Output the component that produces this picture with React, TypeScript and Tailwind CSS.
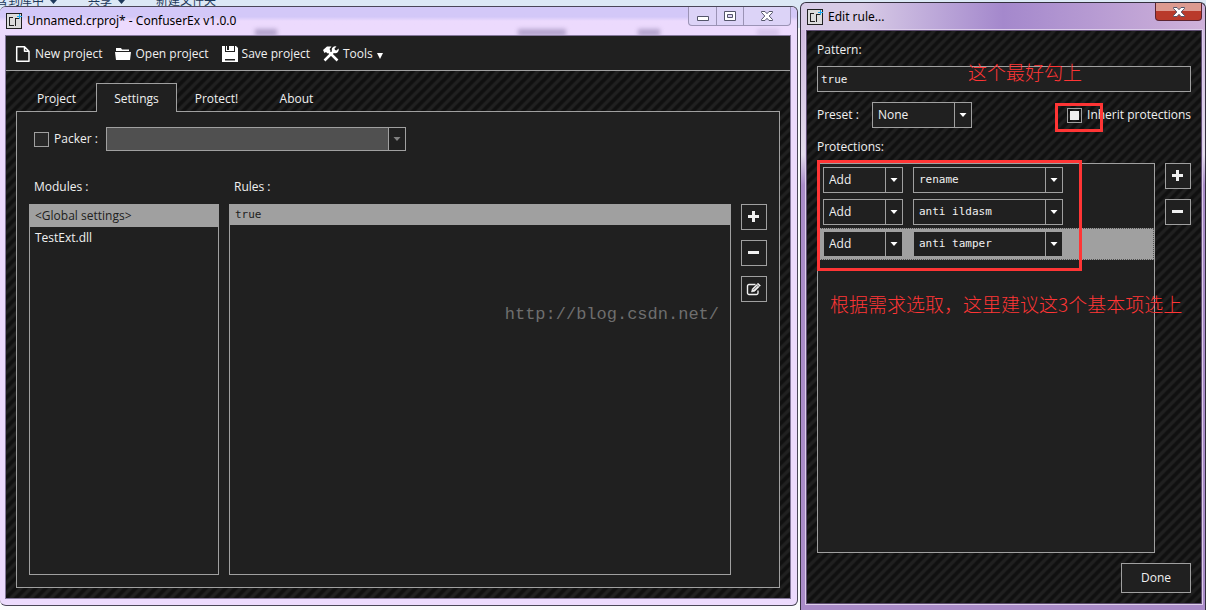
import { useState } from 'react';
import type { ReactNode } from 'react';

const STRIPES =
  'bg-[#202020] bg-[linear-gradient(135deg,#101010_0%,#101010_18%,#202020_28%,#202020_42%,#101010_52%,#101010_68%,#202020_78%,#202020_92%,#101010_100%)] bg-[length:10px_10px]';

const TABS = ['Project', 'Settings', 'Protect!', 'About'];
const MODULES = ['<Global settings>', 'TestExt.dll'];
const PROTECTIONS = ['rename', 'anti ildasm', 'anti tamper'];

function Logo() {
  return (
    <svg viewBox="0 0 16 16" className="h-4 w-4 shrink-0" shapeRendering="crispEdges" aria-hidden="true">
      <path d="M0.5 0.5h15v15h-15z" fill="#dcdcdc" stroke="#202020" />
      <path d="M6.5 4.5h-3v8h4M9.5 13v-7.5h3" fill="none" stroke="#202020" />
      <path d="M13 0.5v5M10.5 3h5" fill="none" stroke="#1ba8f0" />
    </svg>
  );
}

interface ComboProps {
  label: string;
  options: string[];
  className?: string;
  textClass?: string;
  arrowClass?: string;
  disabled?: boolean;
}

function Combo({
  label,
  options,
  className = 'h-[26px]',
  textClass = 'pl-[5px] text-xs',
  arrowClass = 'text-white',
  disabled,
}: ComboProps) {
  return (
    <div className={`relative flex border border-[#a0a0a0] bg-[#202020] ${className}`}>
      <select
        aria-label={label}
        disabled={disabled}
        className={`w-full appearance-none outline-none ${textClass} ${disabled ? 'bg-[#505050]' : 'bg-transparent'}`}
      >
        {options.map((option) => (
          <option key={option} className="bg-[#202020]">{option}</option>
        ))}
      </select>
      <span className={`pointer-events-none absolute inset-y-0 right-0 flex w-[17px] items-center justify-center border-l border-[#a0a0a0] bg-[#202020] ${arrowClass}`}>
        <svg viewBox="0 0 8 4" className="h-1 w-2"><path d="M.5 0h7L4 4z" fill="currentColor" /></svg>
      </span>
    </div>
  );
}

function SquareButton({ label, children }: { label: string; children: ReactNode }) {
  return (
    <button type="button" aria-label={label} className="flex h-[26px] w-[26px] items-center justify-center border border-[#a0a0a0] bg-[#202020] text-[#f0f0f0]">
      {children}
    </button>
  );
}

const PlusIcon = () => (
  <svg viewBox="0 0 12 12" className="h-3 w-3"><path d="M4 0h3v4h4v3H7v4H4V7H0V4h4z" fill="currentColor" /></svg>
);

const MinusIcon = () => (
  <svg viewBox="0 0 12 12" className="h-3 w-3"><path d="M0 4h11v3H0z" fill="currentColor" /></svg>
);

const EditIcon = () => (
  <svg viewBox="0 0 16 14" className="h-[14px] w-4" fill="none" stroke="currentColor">
    <path d="M9.500 2.500H3A1.500 1.500 0 0 0 1.500 4v7A1.500 1.500 0 0 0 3 12.500h7.500A1.500 1.500 0 0 0 12 11V8.500" strokeWidth="1.400" />
    <path d="M5.500 10l.8-3.200L12 1.200l2.500 2.400L8.800 9.200z" fill="currentColor" strokeWidth=".6" />
    <path d="M7.500 7.800l4-4M11 2.400l2.300 2.300" stroke="#202020" strokeWidth=".7" />
  </svg>
);

function ToolButton({ icon, children }: { icon: ReactNode; children: ReactNode }) {
  return (
    <button type="button" className="flex items-center gap-1 whitespace-nowrap">
      <svg viewBox="0 0 16 16" className="h-4 w-4 shrink-0" fill="white">{icon}</svg>
      {children}
    </button>
  );
}

function Toolbar() {
  return (
    <div className="flex h-[35px] shrink-0 items-center gap-[13px] border-b border-[#a0a0a0] bg-[#202020] px-[9px] pt-px">
      <ToolButton icon={<path d="M1.700.800h7.800L14 5.300v9.900H1.700zM9.500.800v4.500H14" fill="none" stroke="white" strokeWidth="1.500" strokeLinejoin="round" />}>
        New project
      </ToolButton>
      <ToolButton icon={<path d="M1 2h5l1 1.500h7V5H1zM0 6h16l-1 8H1z" />}>Open project</ToolButton>
      <ToolButton icon={<path d="M0 0h3v6h10V0h1l2 2v14H0zM4 0h1v4h2V0h5v5H4zM3 13h10v1.500H3z" fillRule="evenodd" />}>
        Save project
      </ToolButton>
      <ToolButton
        icon={
          <>
            <path d="M0 4 4 .5h4.500L6.500 3l1 1.500-3 3-1.500-1.500-1.500 1z" />
            <path d="M5 5l9.500 9.500" fill="none" stroke="white" strokeWidth="2.500" />
            <path d="M1.500 14.500l9-9" fill="none" stroke="white" strokeWidth="2.500" />
            <path d="M9 5a3.500 3.500 0 0 1 4.500-4.500L11.500 2.500l.5 1.500 1.500.5 2-2A3.500 3.500 0 0 1 11 7z" />
          </>
        }
      >
        Tools
        <svg viewBox="0 0 6 6" className="mt-1 h-[6px] w-[6px]"><path d="M0 0h6L3 6z" fill="white" /></svg>
      </ToolButton>
    </div>
  );
}

function CloseGlyph() {
  return (
    <svg viewBox="0 0 12 10" className="h-[10px] w-3">
      <path d="M.5.5h3.500l2 2.200 2-2.200h3.500v1L8.200 5l3.300 3.500v1H8L6 7.300 4 9.500H.5v-1L3.800 5 .5 1.500z" fill="white" stroke="#55566b" />
    </svg>
  );
}

function CaptionButtons() {
  const cell = 'flex h-[18px] items-center justify-center border-[#9b93b5]';
  return (
    <div className="flex self-start rounded-b border border-t-0 border-[#9b93b5] bg-[#dcd3f7]">
      <button type="button" aria-label="Minimize" className={`${cell} w-7 border-r`}>
        <svg viewBox="0 0 12 5" className="mt-1 h-[5px] w-3"><path d="M.5.5h11v4H.5z" fill="white" stroke="#55566b" /></svg>
      </button>
      <button type="button" aria-label="Maximize" className={`${cell} w-[27px] border-r`}>
        <svg viewBox="0 0 12 10" className="h-[10px] w-3">
          <path d="M.5.5h11v9H.5zM3.500 3.500v3h5v-3z" fill="white" stroke="#55566b" fillRule="evenodd" />
        </svg>
      </button>
      <button type="button" aria-label="Close" className={`${cell} w-[46px]`}>
        <CloseGlyph />
      </button>
    </div>
  );
}

// Column headings of the window underneath, seen through the glass caption
function GlassShadows() {
  const smudge = 'absolute top-[22px] h-[7px] bg-[#8f80ae]/60 blur-[2px]';
  return (
    <div className="pointer-events-none absolute inset-0 overflow-hidden">
      <span className={`${smudge} left-[32%] w-[22px]`} />
      <span className={`${smudge} left-[65%] w-12`} />
      <span className={`${smudge} left-[80%] w-[22px]`} />
      <span className={`${smudge} left-[95%] w-[22px] opacity-40`} />
    </div>
  );
}

function MainWindow() {
  const [tab, setTab] = useState('Settings');
  const [selected, setSelected] = useState(MODULES[0]);

  return (
    <section className="mt-[6px] mb-1 flex min-w-0 flex-1 flex-col rounded-md border border-l-0 border-[#4a4658] bg-[#ecdafd] pr-[6px] pb-[6px] pl-[5px]">
      <header className="relative -mr-[6px] -ml-[5px] flex h-[28px] items-center gap-[5px] rounded-t-md bg-linear-to-b from-[#d3c8f8] from-35% to-[#ecdafd] to-50% pr-[6px] pl-[6px] font-['Noto_Sans',sans-serif] text-xs text-black">
        <GlassShadows />
        <Logo />
        <h1 className="flex-1 truncate">Unnamed.crproj* - ConfuserEx v1.0.0</h1>
        <CaptionButtons />
      </header>

      <div className={`relative flex flex-1 flex-col border border-[#85789c] ${STRIPES}`}>
        <Toolbar />
        <div className="flex flex-1 flex-col p-[10px] pt-3">
          <nav className="z-10 -mb-px flex" role="tablist">
            {TABS.map((name) => (
              <button
                key={name}
                type="button"
                role="tab"
                aria-selected={tab === name}
                onClick={() => setTab(name)}
                className={`-mr-px h-[29px] w-[81px] border border-b-0 pt-[2px] ${
                  tab === name ? 'border-[#a0a0a0] bg-[#202020]' : 'border-transparent'
                }`}
              >
                {name}
              </button>
            ))}
          </nav>

          <div className="flex flex-1 flex-col border border-[#a0a0a0] bg-[#202020] px-3 pt-[15px] pb-3">
            <div className="flex items-center pl-[5px]">
              <input id="packer" type="checkbox" className="mr-[5px] h-[15px] w-[15px] appearance-none border border-[#a0a0a0] bg-[#282828]" />
              <label htmlFor="packer" className="mr-2">Packer :</label>
              <Combo label="Packer" options={['']} disabled className="h-6 w-[300px]" arrowClass="text-[#808080]" />
            </div>

            <div className="mt-[27px] flex flex-1 gap-[10px]">
              <div className="flex w-[190px] flex-col">
                <h2 className="mb-2 h-[18px] pl-[5px] leading-[18px]">Modules :</h2>
                <ul className="flex-1 border border-[#a0a0a0]" role="listbox" aria-label="Modules">
                  {MODULES.map((name) => (
                    <li
                      key={name}
                      role="option"
                      aria-selected={selected === name}
                      onClick={() => setSelected(name)}
                      className={`h-[22px] px-[5px] leading-[22px] ${selected === name ? 'bg-[#a0a0a0] text-[#202020]' : ''}`}
                    >
                      {name}
                    </li>
                  ))}
                </ul>
              </div>

              <div className="relative flex min-w-0 flex-1 flex-col">
                <h2 className="mb-2 h-[18px] pl-[5px] leading-[18px]">Rules :</h2>
                <ul className="flex-1 border border-[#a0a0a0]" role="listbox" aria-label="Rules">
                  <li role="option" aria-selected className="h-5 bg-[#a0a0a0] px-[5px] font-['DejaVu_Sans_Mono',monospace] text-[11px] leading-5 text-[#202020]">
                    true
                  </li>
                </ul>
                <p className="pointer-events-none absolute top-[126px] right-3 font-['Liberation_Mono',monospace] text-[17px] text-[#6e6e6e]">
                  http://blog.csdn.net/
                </p>
              </div>

              <div className="mt-[26px] flex flex-col gap-[10px]">
                <SquareButton label="Add rule"><PlusIcon /></SquareButton>
                <SquareButton label="Remove rule"><MinusIcon /></SquareButton>
                <SquareButton label="Edit rule"><EditIcon /></SquareButton>
              </div>
            </div>
          </div>
        </div>
      </div>
    </section>
  );
}

function RuleDialog() {
  const [inherit, setInherit] = useState(true);
  const mono = "font-['DejaVu_Sans_Mono',monospace] text-[11px]";
  const note = "pointer-events-none absolute z-20 whitespace-nowrap font-['Noto_Sans_CJK_SC',sans-serif] text-[19px] font-light leading-6 text-[#ff3535]";

  return (
    <section className="mt-[2px] flex w-[406px] shrink-0 flex-col rounded-t-md border border-b-0 border-[#34303e] bg-linear-to-b from-[#cbb3dd] via-[#e4dcec] via-25% to-[#a98bc8] to-30% pr-[3px] pb-[6px] pl-[5px]">
      <header className="-mr-[3px] -ml-[5px] flex h-[27px] items-center gap-[5px] rounded-t-md bg-linear-to-r from-[#d8cbe6] from-15% via-[#a488cc] to-[#cfb2da] pr-[3px] pl-[6px] font-['Noto_Sans',sans-serif] text-xs text-black">
        <Logo />
        <h1 className="flex-1">Edit rule...</h1>
        <button type="button" aria-label="Close" className="flex h-[18px] w-[47px] items-center justify-center self-start rounded-b border border-t-0 border-[#5c2430] bg-linear-to-b from-[#dc9a90] from-45% to-[#b93a2b] to-50%">
          <CloseGlyph />
        </button>
      </header>

      <div className={`flex flex-1 flex-col border border-[#5d4c70] px-[10px] pt-[10px] pb-[10px] shadow-[0_0_0_1px_#dccdea] ${STRIPES}`}>
        <label htmlFor="pattern" className="h-[18px] leading-[18px]">Pattern:</label>
        <div className="relative mt-[7px]">
          <input id="pattern" defaultValue="true" className={`block h-[26px] w-full border border-[#a0a0a0] bg-[#202020] px-[3px] outline-none ${mono}`} />
          <p className={`${note} -top-[6px] left-[151px]`}>这个最好勾上</p>
        </div>

        <div className="mt-[10px] flex items-center">
          <span className="mr-[13px]">Preset :</span>
          <Combo label="Preset" options={['None', 'Minimum', 'Normal', 'Aggressive', 'Maximum']} className="h-[26px] w-[100px]" />
          <div className="relative ml-auto flex items-center gap-[5px]">
            <input
              id="inherit"
              type="checkbox"
              checked={inherit}
              onChange={() => setInherit(!inherit)}
              className="h-[15px] w-[15px] appearance-none border border-[#a0a0a0] bg-[#202020] bg-clip-content p-[2px] checked:bg-[#f0f0f0]"
            />
            <label htmlFor="inherit">Inherit protections</label>
            <div className="pointer-events-none absolute -top-[4px] -left-3 h-[29px] w-12 border-3 border-[#ff3535]" />
          </div>
        </div>

        <h2 className="mt-[10px] h-[18px] leading-[18px]">Protections:</h2>
        <div className="mt-[7px] flex flex-1 gap-[10px]">
          <div className="relative flex-1 border border-[#a0a0a0] bg-[#202020]">
            {PROTECTIONS.map((name, index) => (
              <div
                key={name}
                className={`flex h-8 items-center gap-[10px] border px-1 ${
                  index === PROTECTIONS.length - 1 ? 'border-dotted border-[#505050] bg-[#a0a0a0]' : 'border-transparent'
                }`}
              >
                <Combo label={`${name} action`} options={['Add', 'Remove']} className="h-[26px] w-20" />
                <Combo
                  label={`Protection ${index + 1}`}
                  options={[name, ...PROTECTIONS.filter((other) => other !== name)]}
                  className="h-[26px] w-[150px]"
                  textClass={`pl-[5px] ${mono}`}
                />
              </div>
            ))}
            <div className="pointer-events-none absolute -top-1 -left-px h-[111px] w-[265px] border-3 border-[#ff3535]" />
            <p className={`${note} top-[128px] left-[12px]`}>根据需求选取，这里建议这3个基本项选上</p>
          </div>
          <div className="flex flex-col gap-[10px]">
            <SquareButton label="Add protection"><PlusIcon /></SquareButton>
            <SquareButton label="Remove protection"><MinusIcon /></SquareButton>
          </div>
        </div>

        <button type="button" className="mt-[10px] h-[30px] w-[70px] self-end border border-[#a0a0a0] bg-[#202020]">Done</button>
      </div>
    </section>
  );
}

function ExplorerItem({ children, menu }: { children: ReactNode; menu?: boolean }) {
  return (
    <span className="-mt-2 flex items-start gap-[6px] whitespace-nowrap">
      {children}
      {menu && <svg viewBox="0 0 7 4" className="mt-2 h-1 w-[7px]"><path d="M0 0h7L3.500 4z" fill="currentColor" /></svg>}
    </span>
  );
}

export default function App() {
  return (
    <main className="relative flex min-h-screen overflow-hidden bg-[#fafafc] font-['Open_Sans',sans-serif] text-xs text-[#f0f0f0]">
      {/* Explorer toolbar behind the windows */}
      <div className="absolute inset-x-0 top-0 flex h-7 gap-[31px] overflow-hidden bg-[#dce8f5] font-['Noto_Sans_CJK_SC',sans-serif] leading-4 text-[#1e395b]">
        <div className="-ml-1"><ExplorerItem menu>含到库中</ExplorerItem></div>
        <ExplorerItem menu>共享</ExplorerItem>
        <ExplorerItem>新建文件夹</ExplorerItem>
      </div>
      <div className="relative flex min-w-0 flex-1 gap-[2px]">
        <MainWindow />
        <RuleDialog />
      </div>
    </main>
  );
}
